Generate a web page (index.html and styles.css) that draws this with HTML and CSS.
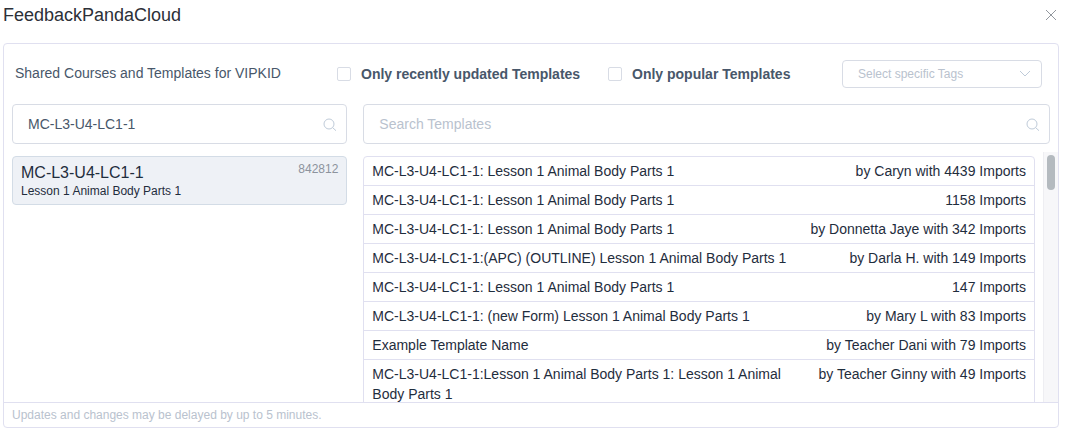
FILE: index.html
```html
<!DOCTYPE html>
<html lang="en">
<head>
    <meta charset="UTF-8">
    <meta name="viewport" content="width=device-width, initial-scale=1.0">
    <title>FeedbackPandaCloud</title>
    <link rel="stylesheet" href="styles.css">
</head>
<body>
    <header class="header">
        <h1>FeedbackPandaCloud</h1>
        <button class="close" type="button" aria-label="Close">
            <svg width="12" height="12" viewBox="0 0 12 12"><path d="M1 1l10 10M11 1L1 11"/></svg>
        </button>
    </header>

    <main class="card">
        <div class="toolbar">
            <h2>Shared Courses and Templates for VIPKID</h2>
            <label class="check recent"><input type="checkbox">Only recently updated Templates</label>
            <label class="check"><input type="checkbox">Only popular Templates</label>
            <div class="select-box">
                <select aria-label="Tags">
                    <option>Select specific Tags</option>
                </select>
                <svg class="arrow" width="12" height="8" viewBox="0 0 12 8"><path d="M1 1l5 5 5-5"/></svg>
            </div>
        </div>

        <div class="columns">
            <section class="courses">
                <div class="search">
                    <input type="text" aria-label="Search Courses" value="MC-L3-U4-LC1-1">
                    <svg class="glass" width="14" height="14" viewBox="0 0 14 14"><circle cx="6" cy="6" r="5"/><path d="M9.7 9.7l3.3 3"/></svg>
                </div>
                <button class="course" type="button">
                    <span class="course-text">
                        <span class="course-name">MC-L3-U4-LC1-1</span>
                        <span class="course-title">Lesson 1 Animal Body Parts 1</span>
                    </span>
                    <span class="course-id">842812</span>
                </button>
            </section>

            <section class="templates">
                <div class="search">
                    <input type="text" aria-label="Search Templates" placeholder="Search Templates">
                    <svg class="glass" width="14" height="14" viewBox="0 0 14 14"><circle cx="6" cy="6" r="5"/><path d="M9.7 9.7l3.3 3"/></svg>
                </div>
                <div class="scroll">
                    <ul class="list">
                        <li><span>MC-L3-U4-LC1-1: Lesson 1 Animal Body Parts 1</span><span class="by">by Caryn with 4439 Imports</span></li>
                        <li><span>MC-L3-U4-LC1-1: Lesson 1 Animal Body Parts 1</span><span class="by">1158 Imports</span></li>
                        <li><span>MC-L3-U4-LC1-1: Lesson 1 Animal Body Parts 1</span><span class="by">by Donnetta Jaye with 342 Imports</span></li>
                        <li><span>MC-L3-U4-LC1-1:(APC) (OUTLINE) Lesson 1 Animal Body Parts 1</span><span class="by">by Darla H. with 149 Imports</span></li>
                        <li><span>MC-L3-U4-LC1-1: Lesson 1 Animal Body Parts 1</span><span class="by">147 Imports</span></li>
                        <li><span>MC-L3-U4-LC1-1: (new Form) Lesson 1 Animal Body Parts 1</span><span class="by">by Mary L with 83 Imports</span></li>
                        <li><span>Example Template Name</span><span class="by">by Teacher Dani with 79 Imports</span></li>
                        <li><span>MC-L3-U4-LC1-1:Lesson 1 Animal Body Parts 1: Lesson 1 Animal Body Parts 1</span><span class="by">by Teacher Ginny with 49 Imports</span></li>
                    </ul>
                    <div class="track"><div class="thumb"></div></div>
                </div>
            </section>
        </div>

        <footer class="footer">Updates and changes may be delayed by up to 5 minutes.</footer>
    </main>
</body>
</html>
```

FILE: styles.css
```css
* {
    box-sizing: border-box;
}

body {
    margin: 0;
    height: 100vh;
    padding: 0 13px 17px 3px;
    display: flex;
    flex-direction: column;
    background-color: #fff;
    color: #1f2d3d;
    font-family: "Liberation Sans", Arial, sans-serif;
    font-size: 14px;
    line-height: 20px;
}

button, input, select {
    font: inherit;
    color: inherit;
}

svg {
    fill: none;
    stroke: #bfcbd9;
    stroke-width: 1;
}

.header {
    display: flex;
    justify-content: space-between;
    align-items: center;
    height: 30px;
    margin-bottom: 13px;
}

h1 {
    margin: 0;
    color: #2c3038;
    font-size: 18px;
    font-weight: normal;
}

.close {
    display: flex;
    padding: 2px;
    border: 0;
    background: none;
}

.close svg {
    stroke: #92979e;
}

.card {
    flex: 1;
    min-height: 0;
    display: flex;
    flex-direction: column;
    border: 1px solid #e0e0f0;
    border-radius: 4px;
}

.toolbar {
    display: flex;
    align-items: center;
    height: 60px;
    padding: 0 16px 0 11px;
    color: #48576a;
}

h2 {
    flex: 0 0 322px;
    margin: 0;
    padding-bottom: 2px;
    font-size: 14px;
    font-weight: normal;
}

.check {
    display: flex;
    align-items: center;
    gap: 10px;
    font-weight: bold;
    white-space: nowrap;
}

.recent {
    flex: 0 0 271px;
}

.check input {
    appearance: none;
    width: 14px;
    height: 14px;
    margin: 0;
    border: 1px solid #d8dce5;
    border-radius: 2px;
}

.select-box {
    position: relative;
    width: 200px;
    margin-left: auto;
}

.select-box select {
    appearance: none;
    display: block;
    width: 100%;
    height: 28px;
    padding: 0 28px 0 15px;
    border: 1px solid #d8dce5;
    border-radius: 4px;
    background-color: #fff;
    color: #b9c2ce;
    font-size: 12px;
}

.arrow {
    position: absolute;
    right: 11px;
    top: 10px;
}

.columns {
    flex: 1;
    min-height: 0;
    display: flex;
}

.courses {
    width: 33.333%;
    padding: 0 8px;
}

.templates {
    flex: 1;
    display: flex;
    flex-direction: column;
    padding-left: 8px;
}

.search {
    position: relative;
}

.templates .search {
    margin-right: 8px;
}

.search input {
    display: block;
    width: 100%;
    height: 40px;
    padding: 0 36px 0 15px;
    border: 1px solid #d8dce5;
    border-radius: 4px;
    color: #48576a;
}

.search input::placeholder {
    color: #b9c2ce;
}

.glass {
    position: absolute;
    right: 10px;
    top: 14px;
}

.course {
    display: flex;
    justify-content: space-between;
    width: 100%;
    margin-top: 12px;
    padding: 6px 8px 5px;
    border: 1px solid #d3dce6;
    border-radius: 4px;
    background-color: #eef1f6;
    text-align: left;
}

.course-text {
    display: flex;
    flex-direction: column;
}

.course-name {
    font-size: 16px;
}

.course-title {
    font-size: 12px;
    line-height: 16px;
}

.course-id {
    color: #8c939d;
    font-size: 12px;
    line-height: 12px;
}

.scroll {
    flex: 1;
    min-height: 0;
    display: flex;
    gap: 8px;
    margin-top: 8px;
    overflow: hidden;
}

.list {
    flex: 1;
    align-self: flex-start;
    margin: 4px 0 0;
    padding: 0;
    list-style: none;
    border: 1px solid #e0e0f0;
    border-radius: 4px;
}

.list li {
    display: flex;
    justify-content: space-between;
    gap: 16px;
    padding: 4px 8px;
    border-bottom: 1px solid #e0e0f0;
}

.by {
    white-space: nowrap;
}

.track {
    width: 15px;
    padding: 3px;
    background-color: #f7f7f9;
    border-left: 1px solid #eeeef2;
}

.thumb {
    width: 8px;
    height: 35px;
    border-radius: 4px;
    background-color: #b4babf;
}

.footer {
    height: 25px;
    padding: 2px 8px;
    border-top: 1px solid #e0e0f0;
    color: #b9c2ce;
    font-size: 12px;
}
```
